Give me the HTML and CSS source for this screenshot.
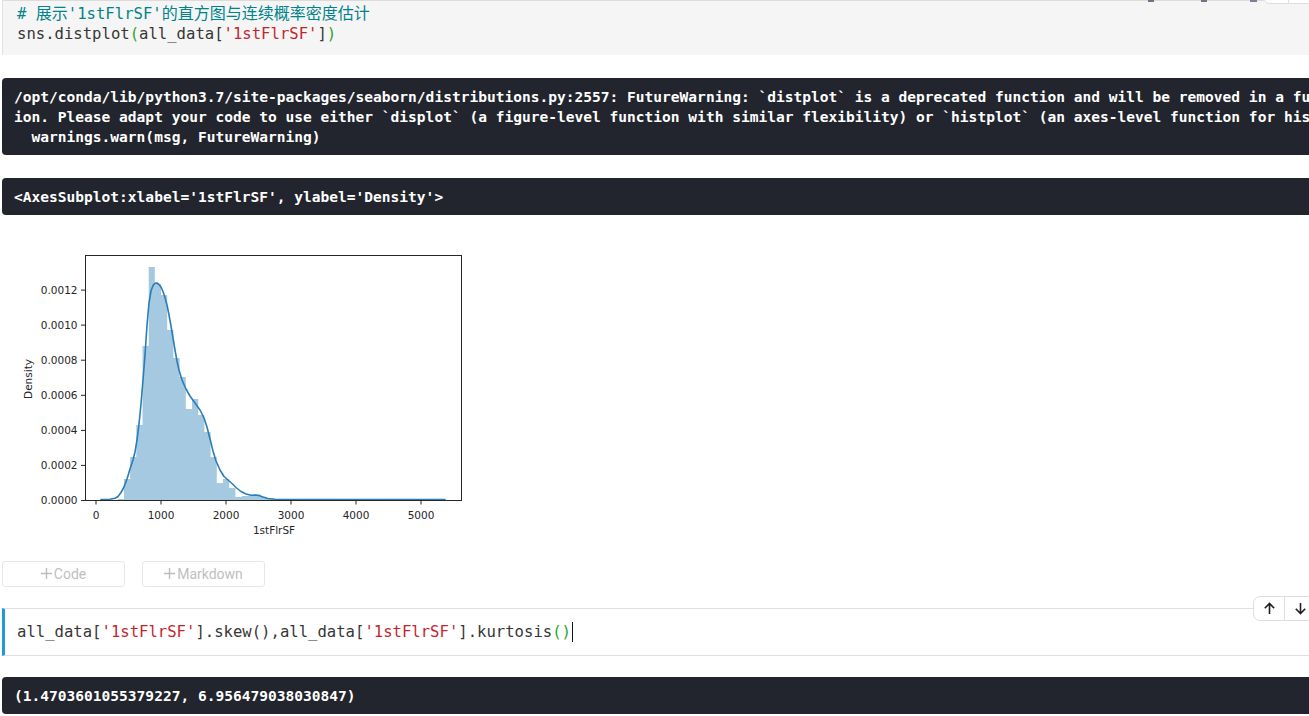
FILE: index.html
```html
<!DOCTYPE html>
<html lang="zh">
<head>
<meta charset="utf-8">
<title>Notebook</title>
<link rel="stylesheet" href="styles.css">
</head>
<body>
<div class="nb">

  <div class="cell code-cell first">
    <div class="icon-bits"><span class="b1"></span><span class="b2"></span><span class="b3"></span></div>
    <div class="cell-toolbar cut">
      <span class="tb-btn"></span><span class="tb-btn"></span>
    </div>
    <div class="code">
      <div class="line"><span class="c-comment"># <span class="cjk">展示</span>'1stFlrSF'<span class="cjk">的直方图与连续概率密度估计</span></span></div>
      <div class="line">sns.distplot<span class="c-br">(</span>all_data[<span class="c-str">'1stFlrSF'</span>]<span class="c-br">)</span></div>
    </div>
  </div>

  <div class="output">
    <div class="line">/opt/conda/lib/python3.7/site-packages/seaborn/distributions.py:2557: FutureWarning: `distplot` is a deprecated function and will be removed in a future vers</div>
    <div class="line">ion. Please adapt your code to use either `displot` (a figure-level function with similar flexibility) or `histplot` (an axes-level function for histograms).</div>
    <div class="line">  warnings.warn(msg, FutureWarning)</div>
  </div>

  <div class="output">
    <div class="line">&lt;AxesSubplot:xlabel='1stFlrSF', ylabel='Density'&gt;</div>
  </div>

  <div class="plot">
    <svg width="470" height="305" viewBox="0 240 470 305" xmlns="http://www.w3.org/2000/svg">
      <path fill="#a5c9e1" d="M117.7 500 V499 H123.9 V479 H130.1 V457 H136.3 V425 H142.5 V346 H148.7 V267 H154.8 V284 H161 V295 H167.2 V330 H173.4 V358 H179.6 V377 H185.8 V409 H192 V399 H198.2 V415 H204.4 V432 H210.6 V457 H216.8 V483 H223 V479 H229.2 V488 H235.4 V497 H241.6 V496 H254 V494.5 H260.2 V497 H266.3 V498.8 H272.5 V499.2 H278.7 V500 Z"/>
      <g fill="#a5c9e1">
        <rect x="297.3" y="499.3" width="6.2" height="0.7"/>
        <rect x="322.0" y="499.4" width="6.2" height="0.6"/>
        <rect x="359.2" y="499.4" width="6.2" height="0.6"/>
        <rect x="396.3" y="499.4" width="6.2" height="0.6"/>
        <rect x="421.0" y="499.4" width="6.2" height="0.6"/>
      </g>
      <polyline fill="none" stroke="#2a7db8" stroke-width="1.6" stroke-linejoin="round" stroke-linecap="round"
        points="101,499.6 110,499.2 115,498.2 118,496.5 121,492.5 124,487 127,479 130,469 133,460 135,452 137,440 139,424 141,404 143,380 145,355 147,325 149,303 151,291 153,285.5 155,283.2 157,283 159,284.5 161,287 163,291.5 165,297.5 167,305 169,315 171,326 173,338 175,350 177,361 179,370 182,380 186,389 190,396 195,403 200,410 204,418 207,427 210,439 213,451 216,461 220,470 224,476.5 228,480 232,483.5 236,487.5 241,491.5 246,494 251,495.3 255,495 259,495.5 263,497 268,498.5 275,499.2 290,499.5 445,499.6"/>
      <g stroke="#262626" stroke-width="1" fill="none">
        <rect x="85.5" y="255.5" width="376" height="245"/>
        <path d="M81 500.5H85 M81 465.4H85 M81 430.4H85 M81 395.3H85 M81 360.2H85 M81 325.1H85 M81 290.1H85"/>
        <path d="M96 500.5V504.5 M161 500.5V504.5 M226 500.5V504.5 M291 500.5V504.5 M356 500.5V504.5 M421 500.5V504.5"/>
      </g>
      <g class="mpl" fill="#262626" font-size="10.5" text-anchor="end">
        <text x="77.5" y="504.3">0.0000</text>
        <text x="77.5" y="469.2">0.0002</text>
        <text x="77.5" y="434.2">0.0004</text>
        <text x="77.5" y="399.1">0.0006</text>
        <text x="77.5" y="364">0.0008</text>
        <text x="77.5" y="328.9">0.0010</text>
        <text x="77.5" y="293.9">0.0012</text>
      </g>
      <g class="mpl" fill="#262626" font-size="10.5" text-anchor="middle">
        <text x="96" y="518.5">0</text>
        <text x="161" y="518.5">1000</text>
        <text x="226" y="518.5">2000</text>
        <text x="291" y="518.5">3000</text>
        <text x="356" y="518.5">4000</text>
        <text x="421" y="518.5">5000</text>
        <text x="274" y="533.5">1stFlrSF</text>
        <text transform="translate(31.5 379) rotate(-90)">Density</text>
      </g>
    </svg>
  </div>

  <div class="add-row">
    <div class="add-btn">
      <svg class="plus" width="11" height="11" viewBox="0 0 11 11"><path d="M5.5 0V11M0 5.5H11" stroke="#bdbdbd" stroke-width="1.4"/></svg>
      <span>Code</span>
    </div>
    <div class="add-btn">
      <svg class="plus" width="11" height="11" viewBox="0 0 11 11"><path d="M5.5 0V11M0 5.5H11" stroke="#bdbdbd" stroke-width="1.4"/></svg>
      <span>Markdown</span>
    </div>
  </div>

  <div class="cell code-cell active">
    <div class="cell-toolbar">
      <span class="tb-btn">
        <svg width="13" height="13" viewBox="0 0 13 13"><path d="M6.5 12V1.5M1.8 6.2L6.5 1.5 11.2 6.2" fill="none" stroke="#1f1f1f" stroke-width="1.6"/></svg>
      </span>
      <span class="tb-btn">
        <svg width="13" height="13" viewBox="0 0 13 13"><path d="M6.5 1V11.5M1.8 6.8L6.5 11.5 11.2 6.8" fill="none" stroke="#1f1f1f" stroke-width="1.6"/></svg>
      </span>
    </div>
    <div class="code">
      <div class="line">all_data[<span class="c-str">'1stFlrSF'</span>].skew(),all_data[<span class="c-str">'1stFlrSF'</span>].kurtosis<span class="c-br">()</span><span class="cursor"></span></div>
    </div>
  </div>

  <div class="output after-active">
    <div class="line">(1.4703601055379227, 6.956479038030847)</div>
  </div>

</div>
</body>
</html>
```

FILE: styles.css
```css
html, body {
  margin: 0;
  padding: 0;
  background: #ffffff;
  overflow: hidden;
}

body {
  width: 1309px;
  height: 716px;
  font-family: Roboto, "Noto Sans", sans-serif;
}

.nb {
  width: 1330px;
}

.line {
  white-space: pre;
  height: 20px;
  line-height: 20px;
}

/* ---------- code cells ---------- */
.cell {
  position: relative;
  margin-left: 2px;
}

.code {
  font-family: "DejaVu Sans Mono", "Noto Sans CJK SC", monospace;
  font-size: 15.6px;
  color: #363636;
}

.cjk {
  font-size: 16px;
}

.code-cell.first {
  background: #f5f5f5;
  border-top: 1px solid #dcdcdc;
  border-left: 1px solid #e2e2e2;
  padding: 3px 0 11px 14px;
}

.code-cell.active {
  margin-top: 21px;
  background: #ffffff;
  border-top: 1px solid #e0e0e0;
  border-bottom: 1px solid #e0e0e0;
  border-left: 3px solid #1e9bd7;
  padding: 13px 0 13px 12px;
}

.c-comment { color: #00838a; }
.c-str { color: #c4262e; }
.c-br { color: #2aa52a; }

.cursor {
  display: inline-block;
  width: 0;
  height: 20px;
  border-left: 1.5px solid #111;
  vertical-align: top;
  margin-left: 1px;
}

/* ---------- floating cell toolbar ---------- */
.cell-toolbar {
  position: absolute;
  top: -13px;
  right: 14px;
  height: 25px;
  display: flex;
  background: #ffffff;
  border: 1px solid #dedede;
  border-radius: 7px;
  box-sizing: border-box;
  overflow: hidden;
}

.cell-toolbar.cut {
  top: -22px;
  right: 10px;
}

.tb-btn {
  width: 30px;
  display: flex;
  align-items: center;
  justify-content: center;
}

.tb-btn + .tb-btn {
  border-left: 1px solid #dedede;
}

.cell-toolbar.cut .tb-btn:first-child {
  width: 24px;
}

.icon-bits {
  position: absolute;
  top: -1px;
  left: 0;
  right: 0;
  height: 2px;
}

.icon-bits span {
  position: absolute;
  top: 0;
  height: 2px;
  width: 6px;
  background: #6d7585;
}

.icon-bits .b1 { left: 1145px; }
.icon-bits .b2 { left: 1198px; }
.icon-bits .b3 { left: 1247px; width: 7px; background: #7a7f9a; }

/* ---------- dark outputs ---------- */
.output {
  margin-top: 23px;
  margin-left: 2px;
  background: #22252d;
  border-radius: 4px;
  padding: 9px 12px 8px;
  font-family: "DejaVu Sans Mono", monospace;
  font-size: 14.56px;
  font-weight: bold;
  color: #ffffff;
}

.output.after-active {
  margin-top: 21px;
}

/* ---------- figure ---------- */
.plot {
  margin-top: 25px;
  height: 305px;
}

.plot svg {
  display: block;
}

.mpl {
  font-family: "DejaVu Sans", sans-serif;
}

/* ---------- add cell buttons ---------- */
.add-row {
  margin-top: 16px;
  padding-left: 2px;
  display: flex;
  gap: 17px;
}

.add-btn {
  width: 123px;
  height: 26px;
  box-sizing: border-box;
  border: 1px solid #e7e7e7;
  border-radius: 3px;
  display: flex;
  align-items: center;
  justify-content: center;
  gap: 2px;
  font-family: Roboto, "Noto Sans", sans-serif;
  font-size: 14px;
  color: #c0c0c0;
}

.plus {
  display: block;
  margin-top: -2px;
}
```
